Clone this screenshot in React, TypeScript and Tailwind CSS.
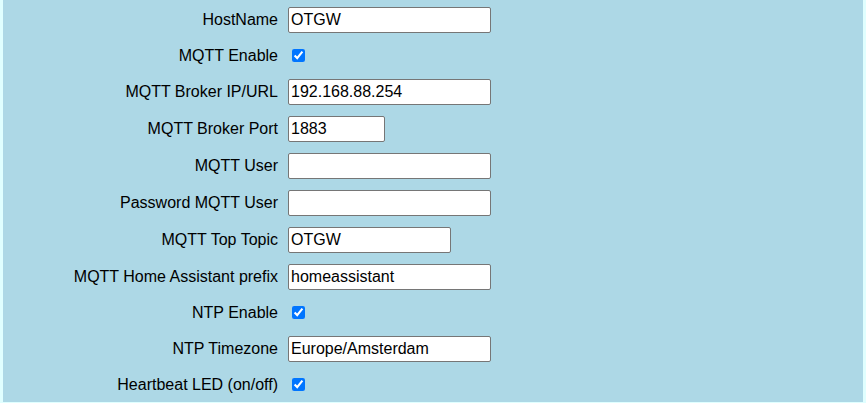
import React from "react";

type Field =
  | { kind: "text"; label: string; value: string; width: number }
  | { kind: "check"; label: string; checked: boolean };

const FIELDS: Field[] = [
  { kind: "text", label: "HostName", value: "OTGW", width: 203 },
  { kind: "check", label: "MQTT Enable", checked: true },
  { kind: "text", label: "MQTT Broker IP/URL", value: "192.168.88.254", width: 203 },
  { kind: "text", label: "MQTT Broker Port", value: "1883", width: 97 },
  { kind: "text", label: "MQTT User", value: "", width: 203 },
  { kind: "text", label: "Password MQTT User", value: "", width: 203 },
  { kind: "text", label: "MQTT Top Topic", value: "OTGW", width: 163 },
  { kind: "text", label: "MQTT Home Assistant prefix", value: "homeassistant", width: 203 },
  { kind: "check", label: "NTP Enable", checked: true },
  { kind: "text", label: "NTP Timezone", value: "Europe/Amsterdam", width: 203 },
  { kind: "check", label: "Heartbeat LED (on/off)", checked: true },
];

function Row({ field }: { field: Field }) {
  return (
    <div
      className={`flex items-center gap-[10px] ${field.kind === "text" ? "h-[37px]" : "h-[35px]"}`}
    >
      <label className="w-[275px] shrink-0 text-right leading-[18px] text-black">
        {field.label}
      </label>
      {field.kind === "text" ? (
        <input
          type="text"
          defaultValue={field.value}
          style={{ width: field.width }}
          className="h-[26px] rounded-[2px] border border-[#767676] bg-white px-[2px] text-[16px] text-black outline-none"
        />
      ) : (
        <input
          type="checkbox"
          defaultChecked={field.checked}
          className="ml-[4px] h-[13px] w-[13px]"
        />
      )}
    </div>
  );
}

export default function App() {
  return (
    <div className="h-[403px] w-[866px] bg-[#e0ffff] font-['Liberation_Sans',Arial,sans-serif] text-[16px]">
      <div className="mx-[3px] h-[402px] bg-[#add8e6] pt-[1px]">
        {FIELDS.map((f) => (
          <Row key={f.label} field={f} />
        ))}
      </div>
    </div>
  );
}
